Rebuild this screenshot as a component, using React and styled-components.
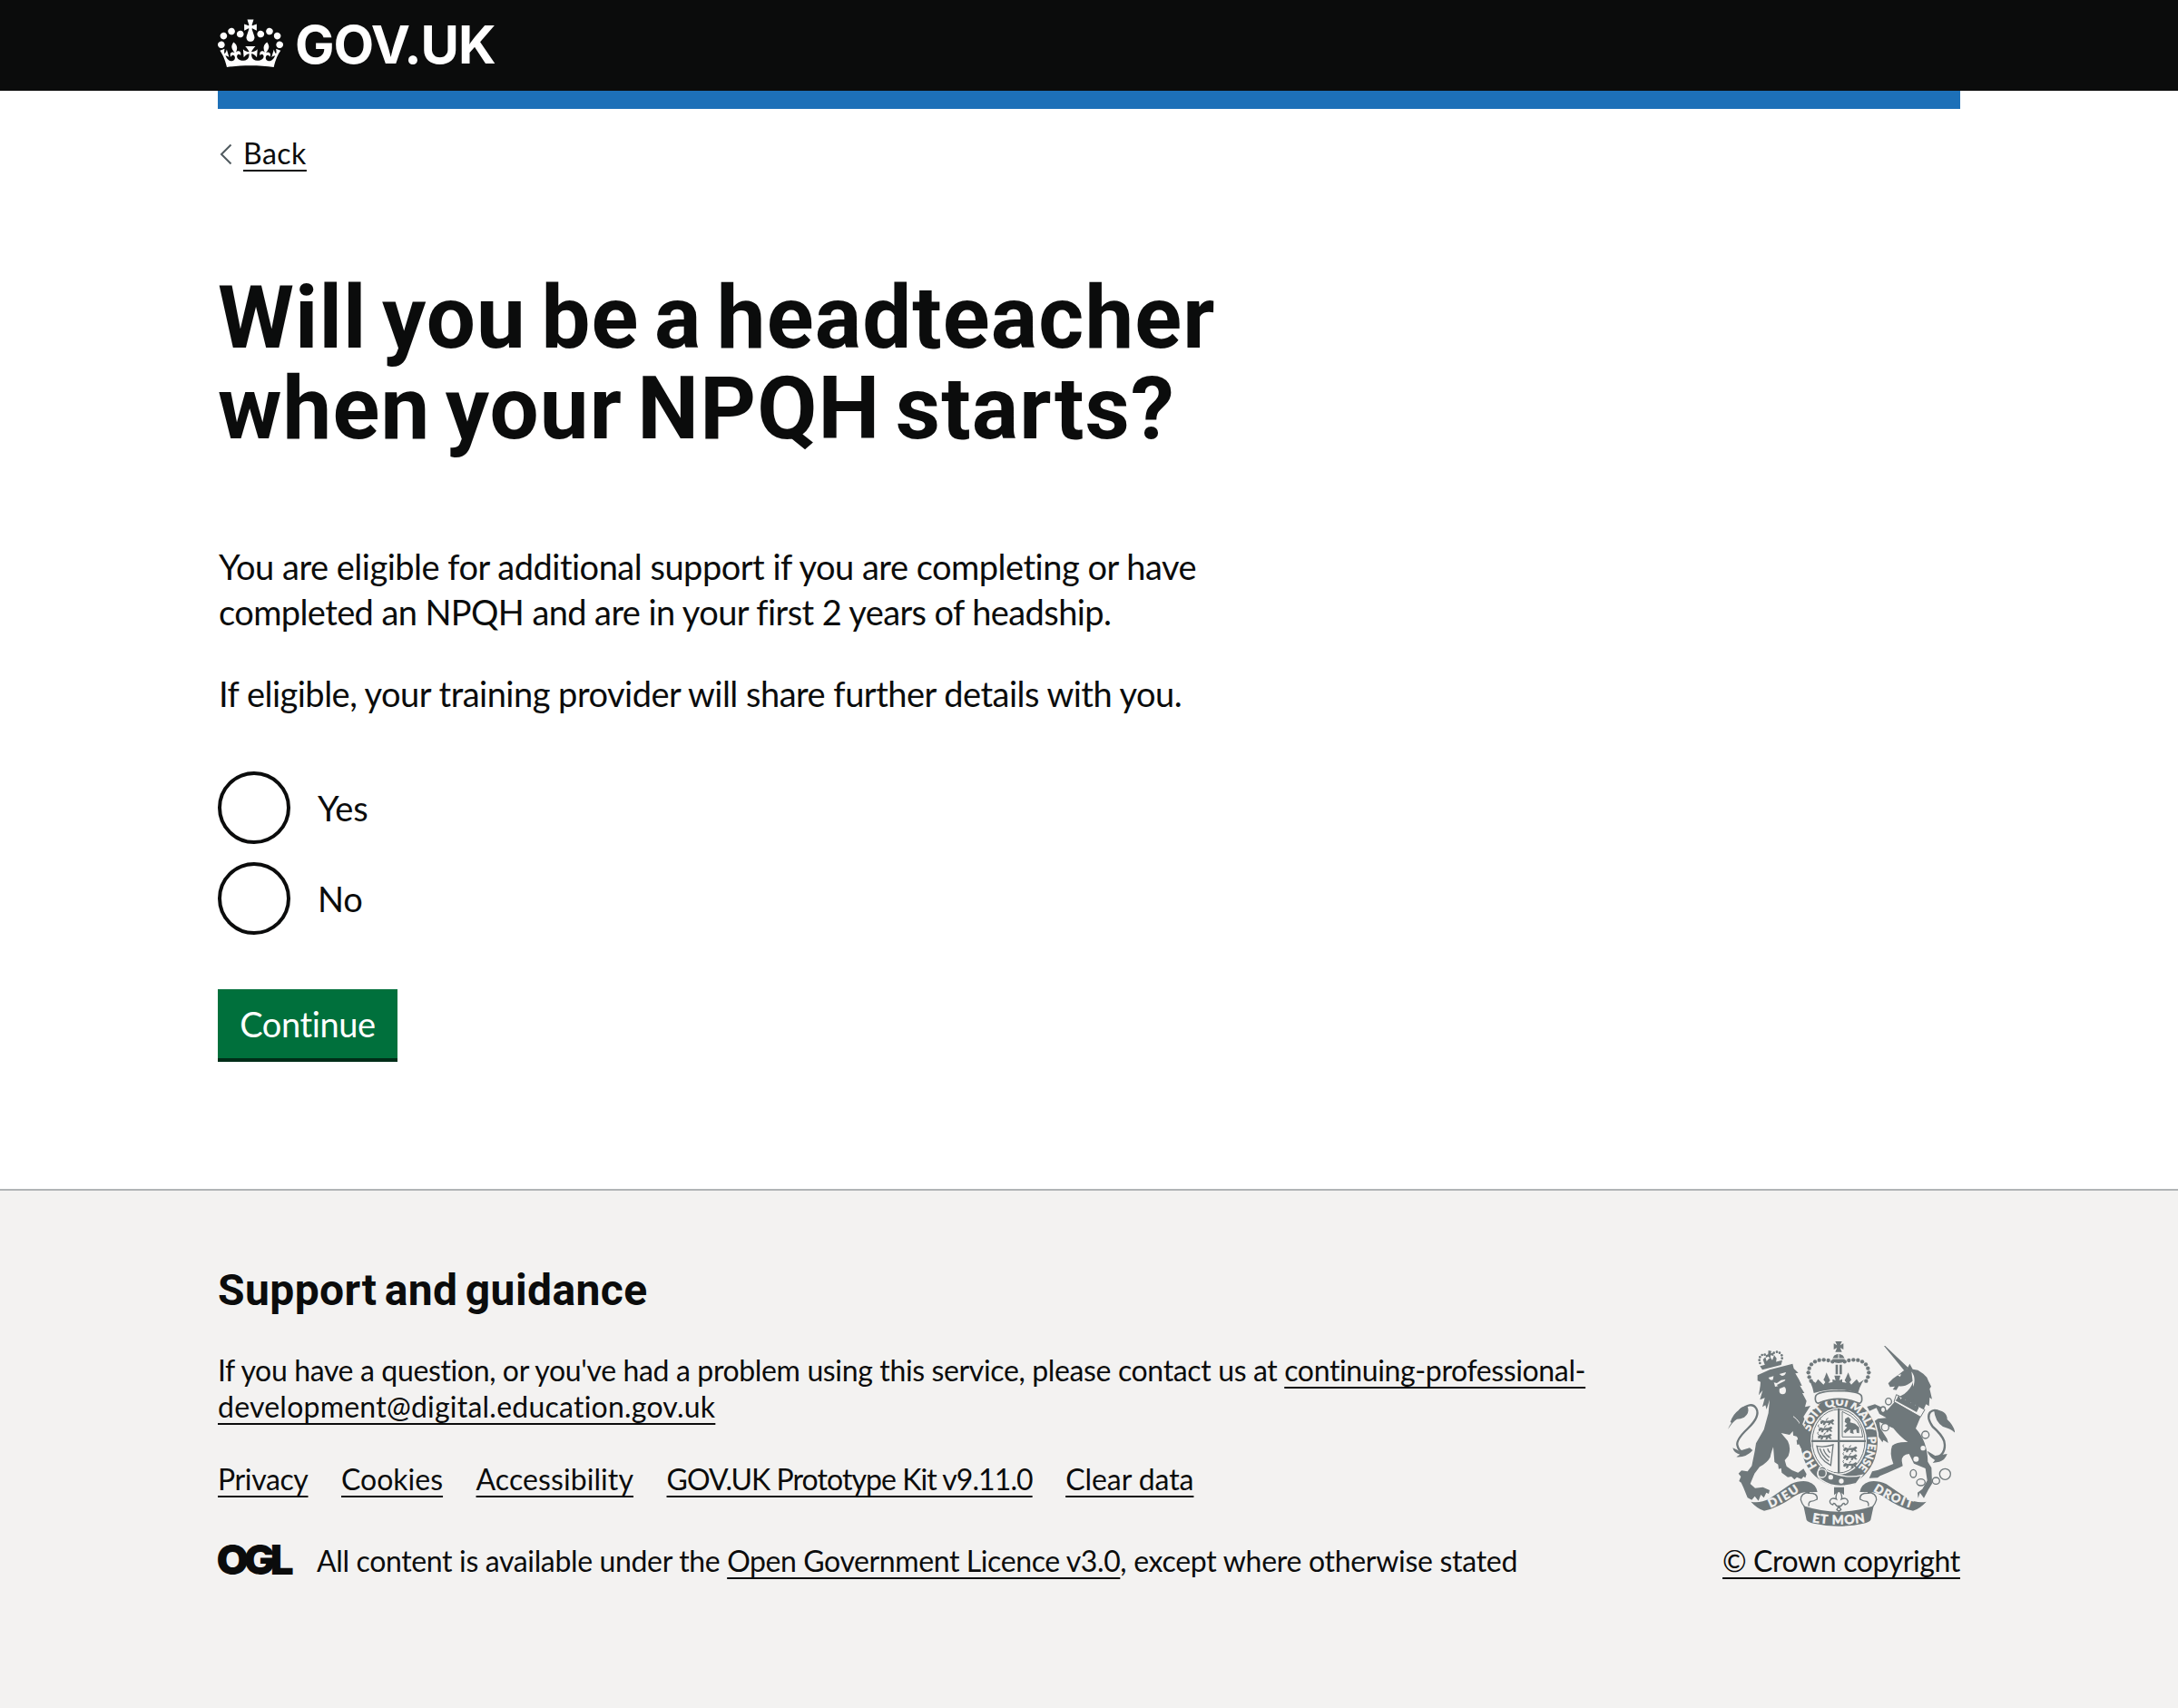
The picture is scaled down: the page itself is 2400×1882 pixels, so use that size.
import React from "react";
import styled, { createGlobalStyle } from "styled-components";

const INK = "#0b0c0c";
const PAPER = "#f3f2f1";
const CREST = "#6f787b";

const GlobalStyle = createGlobalStyle`
  *, *::before, *::after { box-sizing: border-box; }
  body {
    margin: 0;
    background: #fff;
    color: ${INK};
    font-family: Lato, "Noto Sans", sans-serif;
    font-variant-ligatures: none;
  }
  h1, h2, p, ul { margin: 0; padding: 0; }
`;

const Page = styled.div`
  display: flex;
  flex-direction: column;
  min-height: 1882px;
`;

const Container = styled.div`
  width: 1920px;
  margin: 0 auto;
`;

const Header = styled.header`
  background: ${INK};
  height: 100px;
`;

const HeaderInner = styled(Container)`
  display: flex;
  align-items: flex-start;
  height: 100px;
  padding-top: 21px;
`;

const CrownSvg = styled.svg`
  display: block;
  width: 72px;
  height: 54px;
  fill: #fff;
`;

const Logotype = styled.span`
  margin: -4px 0 0 13px;
  color: #fff;
  font: 700 58px/64px Inter, sans-serif;
  letter-spacing: -1.1px;
`;

const BlueBar = styled(Container)`
  height: 20px;
  background: #1d70b8;
`;

const Tracked = styled.span`
  display: ${(p) => (p.$block ? "block" : "inline")};
  letter-spacing: ${(p) => p.$t || 0}px;
  white-space: ${(p) => (p.$block ? "nowrap" : "inherit")};
`;

const Link = styled.a`
  color: inherit;
  letter-spacing: ${(p) => p.$t || 0}px;
  text-decoration: underline;
  text-decoration-thickness: 2px;
  text-decoration-skip-ink: none;
  text-underline-offset: 6px;
`;

const BackRow = styled.div`
  display: flex;
  align-items: center;
  height: 40px;
  margin-top: 29px;
  font-size: 32px;
  line-height: 40px;
`;

const Chevron = styled.svg`
  width: 28px;
  height: 24px;
  margin-top: 2px;
  fill: none;
  stroke: #505a5f;
  stroke-width: 2;
`;

const Heading = styled.h1`
  margin-top: 111px;
  font: 700 96px/100px Roboto, sans-serif;
  word-spacing: -8.5px;
`;

const Body = styled.p`
  margin-top: ${(p) => p.$top}px;
  padding-left: 1px;
  font-size: 38px;
  line-height: 50px;
`;

const Radios = styled.div`
  display: flex;
  flex-direction: column;
  gap: 20px;
  margin-top: 61px;
`;

const RadioLabel = styled.label`
  display: flex;
  align-items: center;
  gap: 30px;
  height: 80px;
  font-size: 38px;
  line-height: 50px;
  letter-spacing: ${(p) => p.$t}px;
`;

const RadioRing = styled.input`
  appearance: none;
  width: 80px;
  height: 80px;
  margin: 0;
  border: 4px solid ${INK};
  border-radius: 50%;
  background: #fff;
`;

const Button = styled.button`
  display: block;
  width: 198px;
  height: 80px;
  margin: 60px 0 140px;
  padding: 9px 0 9px 0;
  border: 0;
  border-bottom: 4px solid #002d18;
  background: #00703c;
  color: #fff;
  font: 400 38px/50px Lato, sans-serif;
  font-variant-ligatures: none;
  letter-spacing: -0.4px;
`;

const Footer = styled.footer`
  flex: 1;
  border-top: 2px solid #b1b4b6;
  background: ${PAPER};
  padding-top: 80px;
`;

const FooterInner = styled(Container)`
  display: flex;
  justify-content: space-between;
  align-items: flex-end;
  font-size: 32px;
  line-height: 40px;
`;

const FooterHeading = styled.h2`
  font: 700 48px/60px Roboto, sans-serif;
  letter-spacing: 0.4px;
  word-spacing: -4px;
`;

const FooterText = styled.p`
  margin-top: 38px;
  white-space: nowrap;
`;

const FooterLinks = styled.ul`
  display: flex;
  gap: 36.5px;
  margin-top: 40px;
  list-style: none;
  white-space: nowrap;
`;

const Licence = styled.div`
  display: flex;
  margin-top: 50px;
  height: 40px;
  white-space: nowrap;
`;

const Ogl = styled.span`
  width: 110.5px;
  margin-top: -2px;
  margin-left: -1.5px;
  font: 900 46px/40px Inter, sans-serif;
  letter-spacing: -5.5px;
`;

const CopyrightColumn = styled.div`
  display: flex;
  flex-direction: column;
  align-items: center;
  width: 262px;
  gap: 18px;
  white-space: nowrap;
`;

const CrestSvg = styled.svg`
  display: block;
  width: 250px;
  height: 204px;
`;

const CrestText = styled.text`
  font: 700 ${(p) => p.$size || 36}px Lato, sans-serif;
  fill: ${PAPER};
  stroke: ${PAPER};
  stroke-width: 1.6px;
  text-anchor: middle;
`;

function Crown() {
  return (
    <CrownSvg viewBox="0 0 132 97" aria-hidden="true">
      <path
        fillRule="evenodd"
        d="M25 30.2c3.5 1.5 7.7-.2 9.1-3.7 1.5-3.6-.2-7.8-3.9-9.2-3.6-1.4-7.6.3-9.1 3.9-1.4 3.5.3 7.5 3.9 9zM9 39.5c3.6 1.5 7.8-.2 9.2-3.7 1.5-3.6-.2-7.8-3.9-9.1-3.6-1.5-7.6.2-9.1 3.8-1.4 3.5.3 7.5 3.8 9zM4.4 57.2c3.5 1.5 7.7-.2 9.1-3.8 1.5-3.6-.2-7.7-3.9-9.1-3.5-1.5-7.6.3-9.1 3.8-1.4 3.5.3 7.6 3.9 9.1zm38.3-21.4c3.5 1.5 7.7-.2 9.1-3.8 1.5-3.6-.2-7.7-3.9-9.1-3.6-1.5-7.6.3-9.1 3.8-1.3 3.6.4 7.7 3.9 9.1zm64.4-5.6c-3.6 1.5-7.8-.2-9.1-3.7-1.5-3.6.2-7.8 3.8-9.2 3.6-1.4 7.7.3 9.2 3.9 1.3 3.5-.4 7.5-3.9 9zm15.9 9.3c-3.6 1.5-7.7-.2-9.1-3.7-1.5-3.6.2-7.8 3.7-9.1 3.6-1.5 7.7.2 9.2 3.8 1.5 3.5-.3 7.5-3.8 9zm4.7 17.7c-3.6 1.5-7.8-.2-9.2-3.8-1.5-3.6.2-7.7 3.9-9.1 3.6-1.5 7.7.3 9.2 3.8 1.3 3.5-.4 7.6-3.9 9.1zM89.3 35.8c-3.6 1.5-7.8-.2-9.2-3.8-1.4-3.6.2-7.7 3.9-9.1 3.6-1.5 7.7.3 9.2 3.8 1.4 3.6-.3 7.7-3.9 9.1zM69.7 17.7l8.9 4.7V9.3l-8.9 2.8c-.2-.3-.5-.6-.9-.9L72.4 0H59.6l3.5 11.2c-.3.3-.6.5-.9.9l-8.8-2.8v13.1l8.8-4.7c.3.3.6.7.9.9l-5 15.4v.1c-.2.8-.4 1.6-.4 2.4 0 4.1 3.1 7.5 7 8.1h.2c.3 0 .7.1 1 .1.4 0 .7 0 1-.1h.2c4-.6 7.1-4.1 7.1-8.1 0-.8-.1-1.7-.4-2.4V34l-5.1-15.4c.4-.2.7-.6 1-.9zM66 92.8c16.9 0 32.8 1.1 47.1 3.2 4-16.9 8.9-26.7 14-33.5l-9.6-3.4c1 4.9 1.1 7.2 0 10.2-1.5-1.4-3-4.3-4.2-8.7L108.6 76c2.8-2 5-3.2 7.5-3.3-4.4 9.4-10 11.9-13.6 11.2-4.3-.8-6.3-4.6-5.6-7.9 1-4.7 5.7-5.9 8-.5 4.3-8.7-3-11.4-7.6-8.8 7.1-7.2 7.9-13.5 2.1-21.1-8 6.1-8.1 12.3-4.5 20.8-4.7-5.4-12.1-2.5-9.5 6.2 3.4-5.2 7.9-2 7.2 3.1-.6 4.3-6.4 7.8-13.5 7.2-10.3-.9-10.9-8-11.2-13.8 2.5-.5 7.1 1.8 11 7.3L80.2 60c-4.1 4.4-8 5.3-12.3 5.4 1.4-4.4 8-11.6 8-11.6H55.5s6.4 7.2 7.9 11.6c-4.2-.1-8-1-12.3-5.4l1.4 16.4c3.9-5.5 8.5-7.7 10.9-7.3-.3 5.8-.9 12.8-11.1 13.8-7.2.6-12.9-2.9-13.5-7.2-.7-5 3.8-8.3 7.1-3.1 2.7-8.7-4.6-11.6-9.4-6.2 3.7-8.5 3.6-14.7-4.6-20.8-5.8 7.6-5 13.9 2.2 21.1-4.7-2.6-11.9.1-7.7 8.8 2.3-5.5 7.1-4.2 8.1.5.7 3.3-1.3 7.1-5.7 7.9-3.5.7-9-1.8-13.5-11.2 2.5.1 4.7 1.3 7.5 3.3l-4.7-15.4c-1.2 4.4-2.7 7.2-4.3 8.7-1.1-3-.9-5.3 0-10.2l-9.5 3.4c5 6.9 9.9 16.7 14 33.5 14.8-2.1 30.8-3.2 47.7-3.2z"
      />
    </CrownSvg>
  );
}

const ARCH = [[118, 76], [104, 72], [89, 70], [74, 71], [60, 76], [48, 85], [41, 98], [38, 112], [41, 127], [47, 140]];
const LION_CROWN = [[118, 66], [116, 56], [118, 46], [125, 39], [134, 38], [164, 32], [174, 29], [183, 32], [190, 40], [191, 50]];

function Passant({ x, y }) {
  return (
    <g transform={`translate(${x} ${y})`}>
      <path d="M0 5l7-5 7 3 18-1 9-5 5 5-6 6 6 6-6 1-6-5-4 7h-6l3-7-9-1-4 8h-6l2-9-5 5-5-1z" />
      <path d="M2 1q-7-6-1-10M20 2q-2-6 6-8" fill="none" stroke={CREST} strokeWidth="3" />
    </g>
  );
}

function ScrollArm() {
  return (
    <g>
      <path d="M28 104q30 6 62-10l70-48q32-14 58-8 26 8 30 34l-28 0q-24-1-46 13-60 42-102 49-22-6-44-30z" />
      <path d="M222 72q-30 4-29 26 4 14 12 22M216 76q34-2 31 20-12 7-22 7-8 5-5 16" fill="none" stroke={CREST} strokeWidth="4" />
    </g>
  );
}

function Crest() {
  return (
    <CrestSvg viewBox="72 54 750 612" fill={CREST} aria-hidden="true">
      <g transform="translate(60 60)">
        <path d="M110 106l40-18 76-20 4 16 15 14-10 2 12 20 10 21-7-1 15 25-7 0 14 26-5 20 18-4-14 22-9 14 12 28 18 34 4 14-4 16 4 17-12-6-6 8-6-7-7 10-9-11-5 3 2-17-12 4-2-16 9-2-9-10-11-3-1-14-11 12-28-6 22 26q12 24 2 50l-12 14 6 20 18 13 20 8 18-13 10 18-4 12-6-4-7 8-15-6-8 8-10-10-12 2-20-15-2-15-8 3-2-15-12-8-4-50q-8 22-10 34-10 18-35 32l-17 22-14 34 16 14 26-3 22 10-3 12-8-4-8 17-10-10-8 20-12-15-10 12-14-7-14-35-7-15-7-5 6-15-8-10 10-10 20 3 14-18 10-50 4-25 26-45 15-55 4-44-10 32-4-14-10 6 8-30-16 6 9-31-13 16 5-31 1-13-10-4z" />
        <path d="M50 224q40-34 56-8 14 26-28 66-42 40-34 58 8 30 44 14" fill="none" stroke={CREST} strokeWidth="7" />
        <path d="M12 285q4-12 12-22l-4-2q8-26 28-40 12-16 30-10 6 22-12 34-12 6-24 6-14 8-30 34zM28 346l22 10 34-10 10 8q-20 24-54 22l12-8q-20-4-24-22z" />
        <path d="M146 114l17-5-2 12q-10 4-15-7zM182 102l22-6q-2 12-14 12zM164 130l10 2 14-10 14-2-4 12-12 8-18 4-2-8z" fill={PAPER} />
        <ellipse cx="193" cy="156" rx="11" ry="13" fill={PAPER} />
        <path d="M174 138l28-14 2 18-20 8z" />
        <path d="M228 242q22 14 34 52" fill="none" stroke={PAPER} strokeWidth="3" />
        <path d="M118 76l74-20-4 16-62 16zM146 24l10 2-2 8 9-2v10l-10-2 0 10-8-6-7 4-1-8 8-3zM128 54l8-8 4 14 7-8 6-4 6 8 6-16 8 10-2 14-36 10z" />
        {LION_CROWN.map(([x, y]) => (
          <circle key={x + "-" + y} cx={x} cy={y} r="4" />
        ))}
      </g>

      <g transform="translate(495 54)">
        <path d="M93 15l4 0 76 72-13 10zM156 98l14-8 8-16 10 18 17 3 18 12 12 12 5 12 9 18-5 8 8 34-8-5-2 28-10-6-10 22-80-46 18-10q24-18 30-44-26 22-48 18l-8 13-12-2 7-10-16 2-6-12q16-18 36-30z" />
        <path d="M138 112l12-3-4 8zM184 100q16 20 6 50" fill={PAPER} />
        <path d="M134 176l94 50-14 24-88-50z" fill={PAPER} stroke={CREST} strokeWidth="3" />
        <path d="M136 190l5-12 8 14 8-14 8 18 8-12 8 20 8-12 8 20 8-12 3 20-7 14-70-38z" />
        <path d="M128 200l86 50-16 38q38 40 40 110l12 20 2 52-12 20-15 28-13-18-6 18-2-18 16-12 16-28-6-40-38-16-16-32q-24 2-24 23l3 17q-15 8-75 33l-8 6-28 1 10-22 20-5 50-20q-14-34-4-60 16-14 52-12-26-18-48-46l-46-20 3 20 22 35 4 14-16-10-3 8-15-21-18-15-2-28 20-14 28-3-23-13-10-20-23 10-8-14 26-8 18 8 22 12z" />
        <path d="M258 388q44-14 34-58-8-22-38-48-22-32-8-48 12-12 30-2" fill="none" stroke={CREST} strokeWidth="7" />
        <path d="M258 226q44 2 44 32 22 20 26 44-16-14-40-20-26-16-30-56zM236 362l26 16 40-6q-8 22-26 26l-22 4 8-10q-20-10-26-30z" />
        <g fill="none" stroke={CREST} strokeWidth="4">
          <ellipse cx="108" cy="199" rx="10" ry="11" />
          <ellipse cx="90" cy="226" rx="8" ry="10" fill={PAPER} />
          <circle cx="97" cy="284" r="12" fill={PAPER} />
          <circle cx="230" cy="309" r="12" />
          <ellipse cx="190" cy="437" rx="10" ry="13" />
          <ellipse cx="215" cy="466" rx="14" ry="11" />
          <ellipse cx="265" cy="461" rx="12" ry="11" />
          <circle cx="295" cy="439" r="18" />
        </g>
        <circle cx="222" cy="353" r="8" fill={PAPER} />
        <circle cx="199" cy="389" r="9" fill={PAPER} />
      </g>

      <ellipse cx="440" cy="386" rx="132" ry="151" fill={PAPER} />
      <ellipse cx="440" cy="386" rx="127" ry="146" />
      <ellipse cx="438" cy="384" rx="93" ry="110" fill={PAPER} />
      <path id="garter" d="M438 502A98 118 0 0 1 438 266A98 118 0 0 1 438 502" fill="none" />
      <CrestText $size={38}><textPath href="#garter" startOffset="16.5%">HO</textPath></CrestText>
      <CrestText $size={38}><textPath href="#garter" startOffset="36%">SOIT</textPath></CrestText>
      <CrestText $size={38}><textPath href="#garter" startOffset="49%">QUI</textPath></CrestText>
      <CrestText $size={38}><textPath href="#garter" startOffset="63%">MALY</textPath></CrestText>
      <CrestText $size={36}><textPath href="#garter" startOffset="81%">PENSE</textPath></CrestText>
      <ellipse cx="438" cy="384" rx="87" ry="105" fill="none" stroke={CREST} strokeWidth="3" />
      <path d="M435 276h7v214h-7zM348 380h180v7H348z" />
      <Passant x={378} y={314} />
      <Passant x={372} y={338} />
      <Passant x={370} y={362} />
      <Passant x={454} y={404} />
      <Passant x={454} y={430} />
      <Passant x={454} y={456} />
      <path d="M450 286v84h68q-2-58-68-84z" fill="none" stroke={CREST} strokeWidth="3" />
      <path d="M460 310l10-6 8 8-2 10 16 4 14 12 0 20-8-2-2-12-10 4 2 12-12-4 0-12-16 14-6-6 12-14-8-4 8-8-8-6z" />
      <path d="M366 400q22 6 54-4l-8 68q-40-20-46-64zM376 408q8 26 30 42M388 410q4 16 20 28M402 408q0 8 8 14" fill="none" stroke={CREST} strokeWidth="4" />
      <path d="M376 470q18-8 24 12 60 28 116 14l-20 28q-70 20-112-10-26-14-8-44z" stroke={PAPER} strokeWidth="4" />
      <circle cx="383" cy="490" r="14" fill="none" stroke={PAPER} strokeWidth="4" />
      <circle cx="412" cy="503" r="8" fill={PAPER} />
      <circle cx="447" cy="516" r="8" fill={PAPER} />
      <path d="M312 318l20 30 12 30 4 26-12-6-6 8-6-8-10 10-10-20-4-40z" />

      <g transform="translate(300 45)">
        <path d="M62 190q6-16 76-18 70 2 76 18 4 22-8 24-66-30-136 0-12-4-8-24z" fill={PAPER} stroke={CREST} strokeWidth="5" />
        <path d="M46 136l16 10 8-12 10 10 8 8 6-8-6-8 4-8 6-16 8 18 4 8-6 8 14-2 0-10 10 4-4-16h20l-4 16 10-4 0 10 14 2-6-8 4-8 8-18 6 16 4 8-6 8 6 8 8-8 10-10 8 12 16-10q-14 20-20 44-66-24-146 0-4-24-16-44z" />
        <path d="M127 9h22l-6 13 11-6v20l-11-6 6 14h-22l6-14-11 6V16l11 6zM118 68q2-16 20-18 18 2 20 18v8q-20 10-40 0zM128 86h8v32h-8zM141 86h8v32h-8z" />
        <path d="M118 66h40M138 48v18" stroke={PAPER} strokeWidth="3" />
        {ARCH.map(([x, y]) => (
          <React.Fragment key={x}>
            <circle cx={x} cy={y} r="6.5" />
            <circle cx={276 - x} cy={y} r="6.5" />
          </React.Fragment>
        ))}
      </g>

      <g transform="translate(120 480)">
        <ScrollArm />
        <g transform="translate(636 0) scale(-1 1)">
          <ScrollArm />
        </g>
        <path d="M202 118q116 38 232 0l-10 46q-4 8-24 12-82 18-164 0-20-4-24-12z" />
        <path d="M303 56h33v26l-16-12-17 12z" />
        <path d="M319 66q14 16 8 30 16-8 22 6 0 10-10 12-2-8-8-2-4 8-12 8-8 0-12-8-6-6-8 2-10-2-10-12 6-14 22-6-6-14 8-30zM311 118h16M319 120l7 10-7 6-7-6z" fill={PAPER} stroke={CREST} strokeWidth="4" />
        <path id="dieu" d="M84 127Q140 106 196 64" fill="none" />
        <path id="droit" d="M426 63Q490 106 566 128" fill="none" />
        <path id="etmon" d="M226 170Q318 187 410 170" fill="none" />
        <CrestText $size={39}><textPath href="#dieu" startOffset="50%" textLength="112">DIEU</textPath></CrestText>
        <CrestText $size={39}><textPath href="#droit" startOffset="50%" textLength="140">DROIT</textPath></CrestText>
        <CrestText $size={41}><textPath href="#etmon" startOffset="50%" textLength="176">ET MON</textPath></CrestText>
      </g>
    </CrestSvg>
  );
}

export default function App() {
  return (
    <Page>
      <GlobalStyle />
      <Header>
        <HeaderInner>
          <Crown />
          <Logotype>GOV.UK</Logotype>
        </HeaderInner>
      </Header>
      <BlueBar />
      <Container as="main">
        <BackRow>
          <Chevron viewBox="0 0 28 24">
            <path d="M14.5 1.5L4 12l10.5 10.5" />
          </Chevron>
          <Link $t={0.5}>Back</Link>
        </BackRow>
        <Heading>
          <Tracked $block $t={1.1}>Will you be a headteacher</Tracked>
          <Tracked $block $t={1.1}>when your NPQH starts?</Tracked>
        </Heading>
        <Body $top={99}>
          <Tracked $block $t={-0.5}>You are eligible for additional support if you are completing or have</Tracked>
          <Tracked $block $t={-0.6}>completed an NPQH and are in your first 2 years of headship.</Tracked>
        </Body>
        <Body $top={40}>
          <Tracked $block $t={-0.51}>If eligible, your training provider will share further details with you.</Tracked>
        </Body>
        <Radios>
          <RadioLabel $t={-0.2}>
            <RadioRing type="radio" name="head" />
            Yes
          </RadioLabel>
          <RadioLabel $t={-0.2}>
            <RadioRing type="radio" name="head" />
            No
          </RadioLabel>
        </Radios>
        <Button>Continue</Button>
      </Container>
      <Footer>
        <FooterInner>
          <div>
            <FooterHeading>Support and guidance</FooterHeading>
            <FooterText>
              <Tracked $t={-0.36}>If you have a question, or you've had a problem using this service, please contact us at </Tracked>
              <Link $t={-0.37}>continuing-professional-</Link>
              <br />
              <Link $t={0.23}>development@digital.education.gov.uk</Link>
            </FooterText>
            <FooterLinks>
              <li><Link $t={-0.37}>Privacy</Link></li>
              <li><Link>Cookies</Link></li>
              <li><Link $t={0.09}>Accessibility</Link></li>
              <li><Link $t={-0.93}>GOV.UK Prototype Kit v9.11.0</Link></li>
              <li><Link $t={-0.06}>Clear data</Link></li>
            </FooterLinks>
            <Licence>
              <Ogl>OGL</Ogl>
              <div>
                <Tracked $t={-0.35}>All content is available under the </Tracked>
                <Link $t={-0.4}>Open Government Licence v3.0</Link>
                <Tracked $t={-0.29}>, except where otherwise stated</Tracked>
              </div>
            </Licence>
          </div>
          <CopyrightColumn>
            <Crest />
            <Link $t={-0.38}>© Crown copyright</Link>
          </CopyrightColumn>
        </FooterInner>
      </Footer>
    </Page>
  );
}
